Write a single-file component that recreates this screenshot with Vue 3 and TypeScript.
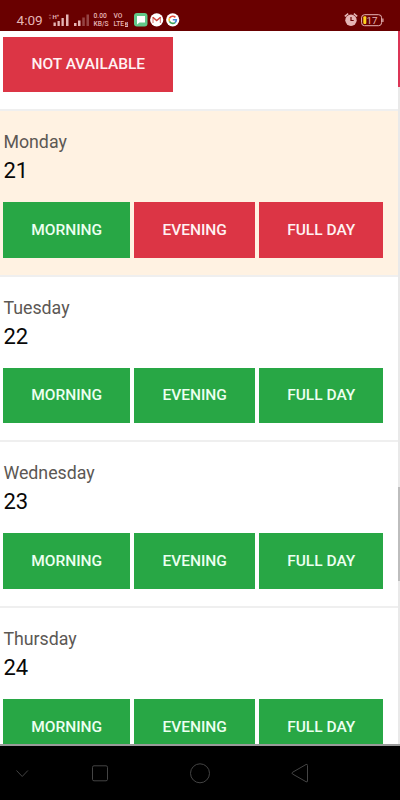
<script setup lang="ts">
interface Slot {
  label: string
  size: 'morning' | 'evening' | 'full'
  free: boolean
}

interface Day {
  name: string
  date: number
  highlighted: boolean
  slots: Slot[]
}

const makeDay = (name: string, date: number, free: boolean[], highlighted = false): Day => ({
  name,
  date,
  highlighted,
  slots: [
    { label: 'MORNING', size: 'morning', free: free[0] },
    { label: 'EVENING', size: 'evening', free: free[1] },
    { label: 'FULL DAY', size: 'full', free: free[2] },
  ],
})

const days: Day[] = [
  makeDay('Monday', 21, [true, false, false], true),
  makeDay('Tuesday', 22, [true, true, true]),
  makeDay('Wednesday', 23, [true, true, true]),
  makeDay('Thursday', 24, [true, true, true]),
]
</script>

<template>
  <div class="phone">
    <header class="status">
      <span class="clock">4:09</span>
      <svg class="signal" width="44" height="16" viewBox="0 0 44 16">
        <path class="faint" d="M.5 4L2 2l1.500 2zM.5 5.500L2 7.500l1.500-2z" />
        <text x="4.500" y="6.500">H⁺</text>
        <path d="M5.500 10.500h2.300V14H5.500zM9.500 9h2.300v5H9.500zM13.500 6h2.300v8h-2.300zM18 2.500h2.500V14H18zM26 11h2.500v3H26zM30 8.500h2.500V14H30z" />
        <path class="faint" d="M34.300 5.500h2.500V14h-2.500zM38.500 2.500H41V14h-2.500z" />
      </svg>
      <span class="tiny speed">0.00<br />KB/S</span>
      <span class="tiny volte">VO<br />LTE<i>2</i></span>
      <svg class="apps" width="46" height="14" viewBox="0 0 46 14">
        <rect x="0" y="0" width="13.500" height="13.500" rx="3" fill="#62c989" />
        <path d="M3 3h8v6.500H5.500L3 11.500z" fill="#fff" />
        <circle cx="22.700" cy="6.800" r="6.600" fill="#fff" />
        <path d="M19 4v6M26.400 4v6" stroke="#d98a84" stroke-width="1.200" />
        <path d="M18.800 4.200l3.900 3.300 3.900-3.300" fill="none" stroke="#cf4038" stroke-width="1.400" />
        <circle cx="38.700" cy="6.800" r="6.600" fill="#fff" />
        <g fill="none" stroke-width="1.600">
          <path d="M41.400 4.400A3.600 3.600 0 0 0 35.500 5.200" stroke="#e04a3e" />
          <path d="M35.500 5.200A3.600 3.600 0 0 0 35.500 8.400" stroke="#f0bb2c" />
          <path d="M35.500 8.400A3.600 3.600 0 0 0 41 9.600" stroke="#3aa65b" />
          <path d="M41 9.600A3.600 3.600 0 0 0 42.300 6.800H38.800" stroke="#4285d8" />
        </g>
      </svg>
      <svg class="power" width="42" height="16" viewBox="0 0 42 16">
        <circle cx="7" cy="8.200" r="5.700" fill="#e5b5b5" />
        <path d="M.8 4.400L4.200 1.600M9.800 1.600l3.400 2.800" stroke="#e5b5b5" stroke-width="1.500" />
        <path d="M7 5v3.500h2.700" fill="none" stroke="#690000" stroke-width="1.200" />
        <rect x="17.600" y="2.700" width="20" height="11" rx="3" fill="none" stroke="#e5b5b5" />
        <path d="M38.300 6.500h1.200v3.500h-1.200z" fill="#e5b5b5" />
        <rect x="19.300" y="4.300" width="3" height="7.800" rx="1" fill="#ffd51c" />
        <text x="22.600" y="11.700" font-size="9.800" fill="#e5b5b5">17</text>
      </svg>
    </header>

    <main class="viewport">
      <div class="list">
        <section class="previous">
          <button class="slot wide busy">NOT AVAILABLE</button>
        </section>
        <section v-for="day in days" :key="day.date" class="day" :class="{ highlighted: day.highlighted }">
          <div class="name">{{ day.name }}</div>
          <div class="date">{{ day.date }}</div>
          <div class="slots">
            <button
              v-for="slot in day.slots"
              :key="slot.label"
              class="slot"
              :class="[slot.size, slot.free ? 'free' : 'busy']"
            >{{ slot.label }}</button>
          </div>
        </section>
      </div>
      <aside class="rail">
        <div class="rail-accent"></div>
        <div class="rail-thumb"></div>
      </aside>
    </main>

    <nav class="nav">
      <svg width="400" height="54" viewBox="0 0 400 54">
        <path d="M16.500 24.500l5.700 6 5.700-6" />
        <rect x="92.500" y="19.800" width="15" height="15" rx="1.500" />
        <circle cx="200" cy="27.300" r="9.500" />
        <path d="M292.500 26.300L306 18.500q1.500-.7 1.500 1v15.500q0 1.500-1.500.7L292.500 28q-1-.8 0-1.700z" />
      </svg>
    </nav>
  </div>
</template>

<style>
body {
  margin: 0;
  overflow: hidden;
}
</style>

<style scoped>
.phone {
  display: flex;
  flex-direction: column;
  width: 400px;
  height: 800px;
  overflow: hidden;
  background: #fff;
  font-family: Roboto, sans-serif;
}
.status {
  display: flex;
  align-items: flex-start;
  box-sizing: border-box;
  flex: 0 0 31px;
  padding: 12px 14px 0 16.500px;
  background: #690000;
  color: #e5b5b5;
}
.clock {
  width: 31.500px;
  font-size: 13.600px;
  line-height: 16px;
}
.signal {
  flex: none;
  fill: #e5b5b5;
}
.signal text {
  font-size: 6px;
  font-weight: 700;
}
.signal .faint {
  fill: #964444;
}
.tiny {
  flex: none;
  font-size: 6.700px;
  font-weight: 500;
  line-height: 8px;
  white-space: nowrap;
}
.speed {
  width: 20px;
  margin-left: 1.500px;
}
.volte {
  width: 20.500px;
}
.volte i {
  display: inline-block;
  margin-left: .5px;
  padding: 0 .3px;
  background: #e5b5b5;
  color: #690000;
  font-size: 5px;
  font-style: normal;
  line-height: 5px;
}
.apps {
  flex: none;
  margin-top: 1px;
}
.power {
  flex: none;
  margin-left: auto;
}
.viewport {
  display: flex;
  flex: 0 0 713.300px;
  overflow: hidden;
}
.list {
  flex: 1;
}
.previous {
  box-sizing: border-box;
  height: 80px;
  padding: 5.700px 0 0 3.400px;
  border-bottom: 2px solid #efefef;
}
.day {
  box-sizing: border-box;
  height: 165.550px;
  padding: 19.300px 0 0 3.400px;
  border-bottom: 2px solid #efefef;
}
.highlighted {
  background: #fff2e2;
}
.name {
  height: 24px;
  color: #5c5854;
  font-size: 17.800px;
  line-height: 24px;
}
.date {
  height: 34px;
  color: #080808;
  font-size: 22px;
  line-height: 34.500px;
}
.slots {
  display: flex;
  gap: 4.500px;
  padding-top: 13.900px;
}
.slot {
  display: block;
  box-sizing: border-box;
  height: 55.500px;
  padding: 0;
  border: 0;
  border-radius: 0;
  color: #fff2f3;
  font: 500 15.500px/54px Roboto, sans-serif;
  text-align: center;
  white-space: nowrap;
}
.free {
  background: #28a745;
  color: #ecfff0;
}
.busy {
  background: #dc3545;
}
.wide {
  width: 169.800px;
}
.morning {
  width: 126.500px;
}
.evening {
  width: 120.500px;
}
.full {
  width: 123.700px;
}
.rail {
  display: flex;
  flex: 0 0 2px;
  flex-direction: column;
  justify-content: flex-start;
  background: #e9e9e9;
}
.rail-accent {
  height: 56px;
  background: #dc3556;
}
.rail-thumb {
  height: 94px;
  margin-top: 400px;
  background: #bdbdbd;
}
.nav {
  flex: 1;
  border-top: 2px solid #9a9a9a;
  background: #000;
}
.nav svg {
  display: block;
  fill: none;
  stroke: #444;
  stroke-width: 1;
}
</style>
